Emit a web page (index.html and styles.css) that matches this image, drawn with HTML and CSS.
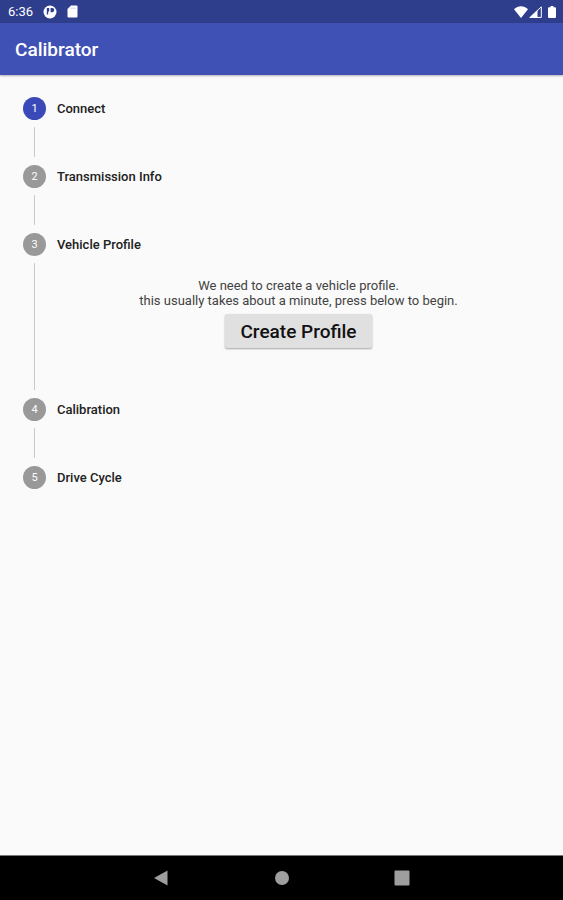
FILE: index.html
```
<!DOCTYPE html>
<html lang="en">
<head>
  <meta charset="UTF-8">
  <meta name="viewport" content="width=device-width, initial-scale=1">
  <title>Calibrator</title>
  <link rel="stylesheet" href="styles.css">
</head>
<body>
<div class="status-bar">
  <div class="status-left">
    <span>6:36</span>
    <svg width="14" height="14" viewBox="0 0 14 14">
      <circle cx="7" cy="7" r="6.5" fill="#fff"/>
      <path d="M3.800 3h2.400v3.400H5.200v3H3.800zM7.600 3h1.600a2.100 2.100 0 0 1 0 4.200H7.600z" fill="#2f3e8c"/>
    </svg>
    <svg width="11" height="13" viewBox="0 0 11 13">
      <path d="M4 .5h5.500a1 1 0 0 1 1 1v10a1 1 0 0 1-1 1h-8a1 1 0 0 1-1-1V4z" fill="#fff"/>
      <path d="M4 2.500v1.500M6 2.500v1.500M8 2.500v1.500" stroke="#a9b1d6" stroke-width=".8"/>
    </svg>
  </div>
  <div class="status-right">
    <svg width="14" height="12" viewBox="0 0 14 12">
      <path d="M0 3.200C4-.8 10-.8 14 3.200L7 12z" fill="#fff"/>
    </svg>
    <svg width="13" height="12" viewBox="0 0 13 12">
      <path d="M12.300.8v10.600H1.200z" fill="none" stroke="#fff"/>
      <path d="M8.500 4v8H0z" fill="#fff"/>
    </svg>
    <svg class="battery" width="8" height="12" viewBox="0 0 8 12">
      <path d="M2.500 0h3v1.200H7a1 1 0 0 1 1 1V11a1 1 0 0 1-1 1H1a1 1 0 0 1-1-1V2.200a1 1 0 0 1 1-1h1.500z" fill="#fff"/>
    </svg>
  </div>
</div>

<header class="app-bar">
  <h1>Calibrator</h1>
</header>

<main>
  <ol class="stepper">
    <li class="step active">
      <div class="marker"><span class="num">1</span></div>
      <h2>Connect</h2>
    </li>
    <li class="step">
      <div class="marker"><span class="num">2</span></div>
      <h2>Transmission Info</h2>
    </li>
    <li class="step">
      <div class="marker"><span class="num">3</span></div>
      <div class="step-body">
        <h2>Vehicle Profile</h2>
        <div class="step-content">
          <p>We need to create a vehicle profile.<br>this usually takes about a minute, press below to begin.</p>
          <button type="button" class="create">Create Profile</button>
        </div>
      </div>
    </li>
    <li class="step">
      <div class="marker"><span class="num">4</span></div>
      <h2>Calibration</h2>
    </li>
    <li class="step">
      <div class="marker"><span class="num">5</span></div>
      <h2>Drive Cycle</h2>
    </li>
  </ol>
</main>

<nav class="nav-bar">
  <button type="button" aria-label="Back">
    <svg width="16" height="16" viewBox="0 0 16 16"><path d="M13.500.5v15L0 8z" fill="#9e9e9e"/></svg>
  </button>
  <button type="button" aria-label="Home">
    <svg width="16" height="16" viewBox="0 0 16 16"><circle cx="8" cy="8" r="7" fill="#9e9e9e"/></svg>
  </button>
  <button type="button" aria-label="Overview">
    <svg width="16" height="16" viewBox="0 0 16 16"><rect x=".5" y=".5" width="15" height="15" rx="1" fill="#9e9e9e"/></svg>
  </button>
</nav>
</body>
</html>
```
FILE: styles.css
```
* {
  margin: 0;
  padding: 0;
  box-sizing: border-box;
}
body {
  display: flex;
  flex-direction: column;
  min-height: 100vh;
  background: #fafafa;
  color: #212121;
  font-family: Roboto, "Liberation Sans", sans-serif;
}
svg {
  display: block;
}
.status-bar {
  display: flex;
  justify-content: space-between;
  align-items: center;
  height: 23px;
  padding: 0 7px 0 8px;
  background: #2f3e8c;
  color: #fff;
  font-size: 13px;
}
.status-left {
  display: flex;
  align-items: center;
  gap: 10px;
}
.status-right {
  display: flex;
  align-items: center;
  gap: 1px;
}
.battery {
  margin-left: 5px;
}
.app-bar {
  display: flex;
  align-items: center;
  height: 52px;
  padding: 0 15px;
  background: #3f51b5;
  color: #fff;
  box-shadow: 0 1px 2px rgba(0, 0, 0, .3);
}
.app-bar h1 {
  font-size: 19px;
  font-weight: 500;
}
main {
  flex: 1;
  padding: 22px 23px;
}
.stepper {
  list-style: none;
}
.step {
  display: flex;
  gap: 11px;
  min-height: 68px;
}
.marker {
  display: flex;
  flex-direction: column;
  align-items: center;
  gap: 7px;
  padding-bottom: 8px;
}
.num {
  width: 23px;
  height: 23px;
  border-radius: 50%;
  background: #999;
  color: #fff;
  font-size: 11px;
  line-height: 23px;
  text-align: center;
}
.active .num {
  background: #3949b8;
}
/* connecting line down to the next step */
.marker::after {
  content: "";
  flex: 1;
  width: 1px;
  background: #c8c8c8;
}
.step:last-child .marker::after {
  display: none;
}
.step h2 {
  font-size: 13px;
  font-weight: 500;
  line-height: 23px;
}
.step-body {
  flex: 1;
}
.step-content {
  padding: 22px 0 50px;
  text-align: center;
}
.step-content p {
  color: #424242;
  font-size: 13px;
  line-height: 15px;
}
.create {
  height: 34px;
  margin-top: 6px;
  padding: 0 15px;
  border: 0;
  border-radius: 2px;
  background: #e0e0e0;
  box-shadow: 0 1px 2px rgba(0, 0, 0, .35);
  color: #111;
  font-family: inherit;
  font-size: 19px;
  font-weight: 500;
}
.nav-bar {
  display: flex;
  justify-content: center;
  align-items: center;
  gap: 104px;
  height: 45px;
  border-top: 1px solid #777;
  background: #000;
}
.nav-bar button {
  border: 0;
  background: none;
}
```
